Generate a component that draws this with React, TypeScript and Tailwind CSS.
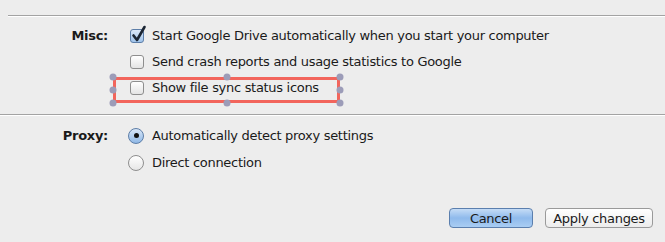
import React from "react";

const font = { fontFamily: '"DejaVu Sans", "Liberation Sans", sans-serif' };

const Checkbox = ({ checked }: { checked?: boolean }) => (
  <span className="relative inline-block w-[14px] h-[14px] shrink-0">
    <span
      className={
        checked
          ? "absolute inset-0 rounded-[3px] border border-[#5d7ea8] bg-gradient-to-b from-[#dbe8f8] to-[#9fc3ea]"
          : "absolute inset-0 rounded-[3px] border border-[#8e8e8e] bg-gradient-to-b from-white to-[#e4e4e4]"
      }
    />
    {checked && (
      <svg
        className="absolute left-[1px] top-[-4px]"
        width="16"
        height="18"
        viewBox="0 0 16 18"
      >
        <path
          d="M2.5 10.5 L6 15 L13.5 2"
          fill="none"
          stroke="#1b2533"
          strokeWidth="2.6"
          strokeLinecap="round"
          strokeLinejoin="round"
        />
      </svg>
    )}
  </span>
);

const Radio = ({ checked }: { checked?: boolean }) => (
  <span
    className={
      checked
        ? "flex items-center justify-center w-[16px] h-[16px] shrink-0 rounded-full border border-[#5d7ea8] bg-gradient-to-b from-[#d9e7f8] to-[#8fb8e6]"
        : "flex items-center justify-center w-[16px] h-[16px] shrink-0 rounded-full border border-[#8e8e8e] bg-gradient-to-b from-white to-[#e6e6e6]"
    }
  >
    {checked && <span className="w-[5px] h-[5px] rounded-full bg-[#111]" />}
  </span>
);

const Handle = ({ className }: { className: string }) => (
  <span
    className={
      "absolute w-[7px] h-[7px] rounded-full bg-[#9c9cb8] -translate-x-1/2 -translate-y-1/2 " +
      className
    }
  />
);

const Separator = () => (
  <div className="h-[2px] border-t border-[#a3a3a3] bg-white" />
);

export default function App() {
  return (
    <div
      className="w-[665px] h-[242px] bg-[#ededed] overflow-hidden text-[13px] tracking-[-0.3px] text-[#1a1a1a]"
      style={font}
    >
      <div className="pt-[15px] pl-[8px]">
        <Separator />
      </div>

      {/* MISC */}
      <div className="grid grid-cols-[108px_1fr] gap-x-[22px] pt-[6px]">
        <div className="h-[26px] flex items-center justify-end font-bold">
          Misc:
        </div>
        <div className="h-[26px] flex items-center gap-[8px]">
          <Checkbox checked />
          <span>Start Google Drive automatically when you start your computer</span>
        </div>
        <div />
        <div className="h-[26px] flex items-center gap-[8px]">
          <Checkbox />
          <span>Send crash reports and usage statistics to Google</span>
        </div>
        <div />
        <div className="relative h-[26px] flex items-center gap-[8px]">
          <Checkbox />
          <span>Show file sync status icons</span>
          {/* selection overlay */}
          <div className="absolute left-[-17px] top-[2px] w-[227px] h-[26px] pointer-events-none">
            <div className="absolute inset-0 rounded-[3px] border-[3px] border-[#f2655c]" />
            <Handle className="left-0 top-0" />
            <Handle className="left-1/2 top-0" />
            <Handle className="left-full top-0" />
            <Handle className="left-0 top-1/2" />
            <Handle className="left-full top-1/2" />
            <Handle className="left-0 top-full" />
            <Handle className="left-1/2 top-full" />
            <Handle className="left-full top-full" />
          </div>
        </div>
      </div>

      <div className="pt-[13px]">
        <Separator />
      </div>

      {/* PROXY */}
      <div className="grid grid-cols-[108px_1fr] gap-x-[20px] pt-[6px]">
        <div className="h-[27px] flex items-center justify-end font-bold">
          Proxy:
        </div>
        <div className="h-[27px] flex items-center gap-[8px]">
          <Radio checked />
          <span>Automatically detect proxy settings</span>
        </div>
        <div />
        <div className="h-[27px] flex items-center gap-[8px]">
          <Radio />
          <span>Direct connection</span>
        </div>
      </div>

      {/* BUTTONS */}
      <div className="flex justify-end gap-[12px] pr-[12px] pt-[32px]">
        <button className="w-[84px] h-[20px] rounded-[4px] border border-[#5b7fae] bg-gradient-to-b from-[#c5dcf6] via-[#8fbaec] to-[#a9cdf3] text-[13px] leading-none">
          Cancel
        </button>
        <button className="w-[108px] h-[20px] rounded-[4px] border border-[#9a9a9a] bg-gradient-to-b from-white to-[#ececec] text-[13px] leading-none">
          Apply changes
        </button>
      </div>
    </div>
  );
}
